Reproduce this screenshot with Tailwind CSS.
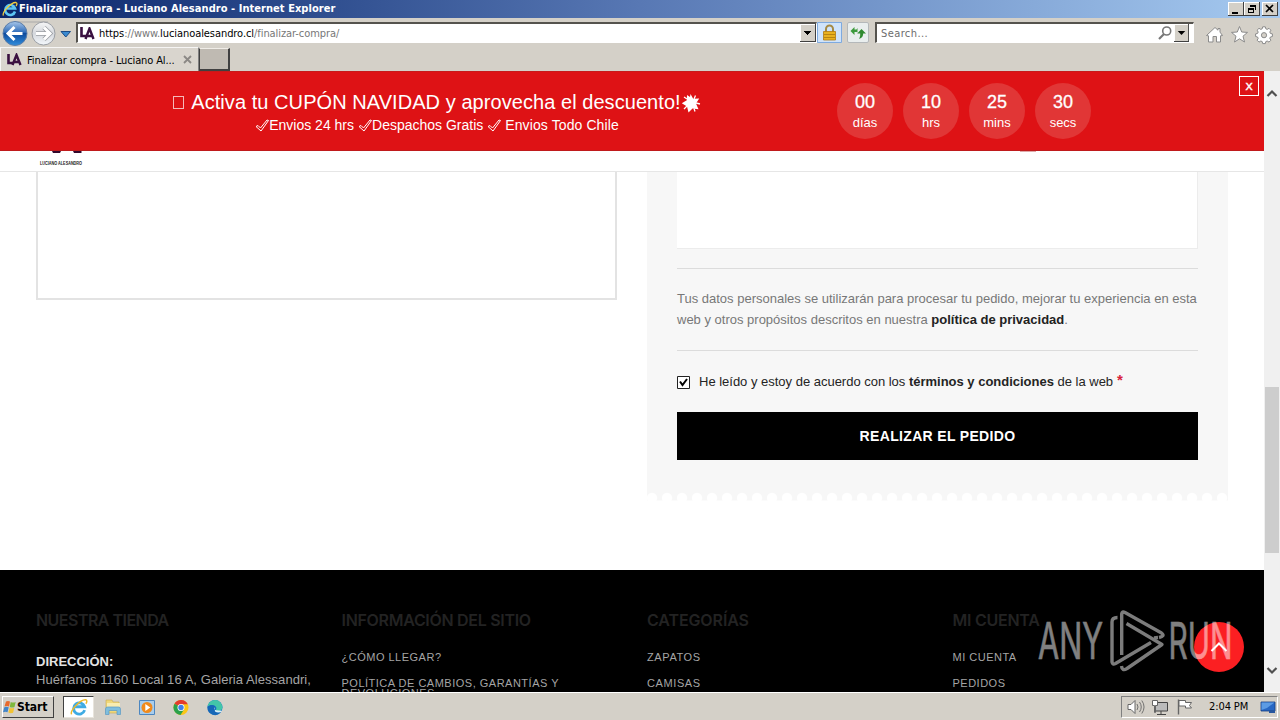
<!DOCTYPE html>
<html lang="es">
<head>
<meta charset="utf-8">
<title>Finalizar compra - Luciano Alesandro</title>
<script src="https://cdn.jsdelivr.net/npm/@tailwindcss/browser@4"></script>
</head>
<body class="w-[1280px] h-[720px] overflow-hidden flex flex-col bg-[#d4d0c8] font-['Liberation_Sans',sans-serif] whitespace-nowrap">

<!-- Title bar -->
<div class="h-[18px] shrink-0 flex items-center bg-linear-to-r from-[#0a246a] via-[#5878b4] to-[#a6caf0] pl-[2px] pr-[2px]">
  <svg class="w-4 h-4 mr-px" viewBox="0 0 16 16"><path d="M13 10.500A5 5 0 1 1 13 7.500H5" fill="none" stroke="#5cc4f4" stroke-width="2.600"/><path d="M1.500 14.500C-.5 12 9 1 14 1.500 15.500 2 15 4 14 5" fill="none" stroke="#f5cf3c" stroke-width="1.300"/></svg>
  <span class="text-white font-bold font-['DejaVu_Sans_Condensed','DejaVu_Sans',sans-serif] font-stretch-condensed text-[11px] leading-[18px] tracking-[0.05px]">Finalizar compra - Luciano Alesandro - Internet Explorer</span>
  <div class="ml-auto flex">
    <svg class="w-[50px] h-[14px]" viewBox="0 0 50 14" shape-rendering="crispEdges">
      <g><path d="M0 0h16v14H0zM16 0h16v14H16zM34 0h16v14H34z" fill="#404040"/><path d="M0 0h15v13H0zM16 0h15v13H16zM34 0h15v13H34z" fill="#fff"/><path d="M1 1h14v12H1zM17 1h14v12H17zM35 1h14v12H35z" fill="#d4d0c8"/></g>
      <path d="M4 10h6v2H4z"/><path d="M22.500 3.500h5v4M20.500 6.500h5v4h-5z" fill="none" stroke="#000"/><path d="M22 3h6v2h-6zM20 6h6v2h-6z"/><path d="M38 3l7 7M45 3l-7 7" stroke="#000" stroke-width="1.700" shape-rendering="auto"/>
    </svg>
  </div>
</div>

<!-- Address bar -->
<div class="h-[29px] shrink-0 flex items-start pt-[3px] font-['DejaVu_Sans_Condensed','DejaVu_Sans',sans-serif] font-stretch-condensed text-[11px]">
  <svg class="w-[75px] h-[26px] shrink-0" viewBox="0 0 75 26">
    <defs><linearGradient id="bk" x1="0" y1="0" x2="0" y2="1"><stop offset="0" stop-color="#a9c7ea"/><stop offset=".45" stop-color="#2f6cba"/><stop offset=".5" stop-color="#0f4b9c"/><stop offset="1" stop-color="#2f8ddd"/></linearGradient><linearGradient id="fw" x1="0" y1="0" x2="0" y2="1"><stop offset="0" stop-color="#f6f6f6"/><stop offset=".5" stop-color="#d5d8dd"/><stop offset="1" stop-color="#f4f8fc"/></linearGradient></defs>
    <path d="M15 1H48" stroke="#aaa" fill="none"/>
    <circle cx="43.500" cy="12.500" r="11.500" fill="url(#fw)" stroke="#999da3"/>
    <circle cx="15" cy="12.500" r="12" fill="url(#bk)" stroke="#5a7ca8"/>
    <path d="M8 12.500h14.500M14.500 6L8 12.500l6.500 6.500" fill="none" stroke="#fff" stroke-width="3"/>
    <path d="M36 12.500h14M44 6.500l6 6-6 6" fill="none" stroke="#9a9da2" stroke-width="4.500"/><path d="M36 12.500h14M44 6.500l6 6-6 6" fill="none" stroke="#fff" stroke-width="3"/>
    <path d="M61 10.500h9.500l-4.700 5.500z" fill="#3a8ad0" stroke="#1b4c86"/>
  </svg>
  <div class="w-[741px] h-[21px] mt-[1px] ml-[1px] shrink-0 bg-white border-t-2 border-l-2 border-t-[#55534e] border-l-[#55534e] border-b border-r border-b-white border-r-white flex items-center">
    <svg class="w-[15px] h-[13px] ml-[2px]" viewBox="0 0 15 13"><path d="M1.500 0v9H6" fill="none" stroke="#3a1040" stroke-width="2.600"/><path d="M5.500 12L9.500 1.500 13.500 12M6 9h7" fill="none" stroke="#3a1040" stroke-width="2.400"/></svg>
    <span class="ml-[4px] pt-[2px] text-[#777] leading-[18px] tracking-[-0.07px]"><span class="text-black">https</span>://www.<span class="text-black">lucianoalesandro.cl</span>/finalizar-compra/</span>
    <svg class="w-4 h-[18px] ml-auto" viewBox="0 0 16 18" shape-rendering="crispEdges"><path d="M0 0h16v18H0z" fill="#404040"/><path d="M0 0h15v17H0z" fill="#fff"/><path d="M1 1h14v16H1z" fill="#d4d0c8"/><path d="M4 7h7v1H4zM5 8h5v1H5zM6 9h3v1H6zM7 10h1v1H7z"/></svg>
  </div>
  <svg class="w-[25px] h-[22px] shrink-0" viewBox="0 0 25 22"><path d="M.5 1.500h24v20H.5z" fill="#cfe3fa" stroke="#7eaadf"/><path d="M9 11V8a3.500 3.500 0 0 1 7 0v3" fill="none" stroke="#a58a45" stroke-width="2"/><path d="M6.500 10.500h12V19h-12z" fill="#e9b11e" stroke="#b07a10" stroke-width=".8"/><path d="M7 13.500h11M7 16.500h11" stroke="#b98410"/></svg>
  <svg class="w-[22px] h-[22px] ml-[5px] shrink-0" viewBox="0 0 22 22"><rect x=".5" y="1.500" width="21" height="20" rx="1.500" fill="#e9eeee" stroke="#b4b8ba"/><g fill="#3c9a3c"><path d="M3.500 10L7.500 6v2.500h2L10.500 7v4.500l-1-.5h-2v3z" /><path d="M14.500 8l4.500 4.500h-2.800q0 4-4 5.500 1.300-2.500 1-5.500h-3z" fill="#2f8a30"/></g></svg>
  <div class="w-[319px] h-[21px] mt-[1px] ml-[6px] shrink-0 bg-white border-t-2 border-l-2 border-t-[#55534e] border-l-[#55534e] border-b border-r border-b-white border-r-white flex items-center">
    <span class="ml-[4px] pt-[2px] text-[#6d6d6d] leading-[18px] tracking-[0.4px]">Search...</span>
    <svg class="w-[14px] h-[14px] ml-auto mr-[2px]" viewBox="0 0 14 14"><circle cx="8.700" cy="5" r="4" fill="none" stroke="#777" stroke-width="1.600"/><path d="M6 8L1 13" stroke="#777" stroke-width="2.200"/></svg>
    <svg class="w-[15px] h-[18px] mr-[4px]" viewBox="0 0 16 18" preserveAspectRatio="none"><path d="M0 0h16v18H0z" fill="#404040"/><path d="M0 0h15v17H0z" fill="#fff"/><path d="M1 1h14v16H1z" fill="#d4d0c8"/><path d="M4 7h8l-4 4z"/></svg>
  </div>
  <svg class="w-[68px] h-[20px] mt-[4px] ml-[11px] shrink-0" viewBox="0 0 68 20" fill="#fff" stroke="#8b8b8b" stroke-width="1">
    <path d="M1.500 10.500L10 2.500l3 2.700V3.500h2v3.600l2.500 3.400-2 .3V17h-4v-5.500H8V17H3.500v-6.200z"/>
    <path d="M34.500 1.500l2.200 5.500 5.800.4-4.500 3.800 1.500 5.800-5-3.200-5 3.200 1.500-5.800-4.500-3.800 5.800-.4z"/>
    <path d="M57.700 2.500h2.600l.5 2 1.400.6 1.800-1.100 1.900 1.900-1.100 1.800.6 1.400 2 .5v2.600l-2 .5-.6 1.400 1.100 1.800-1.900 1.900-1.800-1.100-1.400.6-.5 2h-2.600l-.5-2-1.400-.6-1.800 1.100-1.900-1.900 1.100-1.800-.6-1.400-2-.5V9.600l2-.5.6-1.400-1.100-1.800L54 4l1.800 1.100 1.400-.6z" transform="translate(0 -.7)"/><circle cx="59" cy="10.200" r="2.600" fill="#d4d0c8"/>
  </svg>
</div>

<!-- Tabs -->
<div class="h-[24px] shrink-0 flex font-['DejaVu_Sans_Condensed','DejaVu_Sans',sans-serif] font-stretch-condensed text-[11px]">
  <div class="w-[199px] h-[24px] flex items-center border-l border-t border-white/80 border-r border-r-[#808080] pl-[6px] bg-[#d9d5ce]">
    <svg class="w-[15px] h-[13px]" viewBox="0 0 15 13"><path d="M1.500 1v9H6" fill="none" stroke="#3a1040" stroke-width="2.600"/><path d="M5.500 12L9.500 2 13.500 12M6 9h7" fill="none" stroke="#3a1040" stroke-width="2.400"/></svg>
    <span class="ml-[5px] pt-[2px] text-black leading-[22px] tracking-[-0.13px]">Finalizar compra - Luciano Al...</span>
    <svg class="w-[9px] h-[9px] ml-auto mr-[6px]" viewBox="0 0 9 9"><path d="M1 1l7 7M8 1L1 8" stroke="#8b8885" stroke-width="1.800"/></svg>
  </div>
  <div class="w-[31px] h-[23px] mt-px border border-r-2 border-b-2 border-[#404040] border-t-[#f0ede8] border-l-[#404040] bg-[#bfbab2]"></div>
</div>

<!-- Viewport -->
<div class="h-[621px] shrink-0 flex bg-white">
  <div class="w-[1264px] h-full flex flex-col overflow-hidden relative">

    <!-- Promo banner -->
    <div class="h-[80px] shrink-0 bg-[#de1215] border-t border-b border-t-[#c81a1a] border-b-[#c01a1c] text-white flex relative">
      <div class="w-[837px] pl-[37px] flex flex-col items-center pt-[18px]">
        <div class="flex items-center h-[25px] text-[20px] leading-[25px]">
          <span class="w-[11px] h-[13px] border border-white/70 mr-[7px]"></span>
          <span class="tracking-[0.06px]">Activa tu CUPÓN NAVIDAD y aprovecha el descuento!</span>
          <svg class="w-[20px] h-[20px]" viewBox="0 0 20 20" fill="#fff"><path d="M9.500 1l2.700 4.800 6-.2-3.200 5 2.500 5.600-6-.8L7.500 19.500 6 13.500.8 10.200l5-3L6 2l3 2z"/><path d="M3 4l3 2M14.500 2.500L13 6M19 11l-4-1M14 18.500l-1-3M3 16l3-3" stroke="#fff" stroke-width="1.300"/></svg>
        </div>
        <div class="flex items-center h-[20px] text-[14px] leading-[20px]">
          <svg class="w-[14px] h-[13px]" viewBox="0 0 14 13"><path d="M1 7.500l2-1L5.500 9 12 1l1.500.5L6 12z" fill="none" stroke="#fff"/></svg>
          <span>Envios 24 hrs</span>
          <svg class="w-[14px] h-[13px] ml-[4px]" viewBox="0 0 14 13"><path d="M1 7.500l2-1L5.500 9 12 1l1.500.5L6 12z" fill="none" stroke="#fff"/></svg>
          <span>Despachos Gratis</span>
          <svg class="w-[14px] h-[13px] ml-[4px]" viewBox="0 0 14 13"><path d="M1 7.500l2-1L5.500 9 12 1l1.500.5L6 12z" fill="none" stroke="#fff"/></svg>
          <span class="ml-[4px] tracking-[0.1px]">Envios Todo Chile</span>
        </div>
      </div>
      <div class="flex gap-[10px] pt-[11px] text-center">
        <div class="size-[56px] rounded-full bg-[#e13636] pt-[8px]"><div class="text-[18px] leading-[22px] [-webkit-text-stroke:0.3px_white]">00</div><div class="text-[13px] leading-[19px]">días</div></div>
        <div class="size-[56px] rounded-full bg-[#e13636] pt-[8px]"><div class="text-[18px] leading-[22px] [-webkit-text-stroke:0.3px_white]">10</div><div class="text-[13px] leading-[19px]">hrs</div></div>
        <div class="size-[56px] rounded-full bg-[#e13636] pt-[8px]"><div class="text-[18px] leading-[22px] [-webkit-text-stroke:0.3px_white]">25</div><div class="text-[13px] leading-[19px]">mins</div></div>
        <div class="size-[56px] rounded-full bg-[#e13636] pt-[8px]"><div class="text-[18px] leading-[22px] [-webkit-text-stroke:0.3px_white]">30</div><div class="text-[13px] leading-[19px]">secs</div></div>
      </div>
      <div class="ml-auto mr-[5px] mt-[4px] w-[20px] h-[20px] border border-white text-center text-[13px] leading-[17px] font-['DejaVu_Sans',sans-serif] [-webkit-text-stroke:0.3px_white]">x</div>
    </div>

    <!-- Sticky header remainder -->
    <div class="h-[21px] shrink-0 bg-white border-b border-[#e6e6e6] flex justify-between">
      <div class="ml-[39px] w-[46px]">
        <svg class="w-[46px] h-[18px] overflow-visible" viewBox="0 0 46 18"><path d="M13 0h9l-1 2h-7zM34 0h8.500v2H35z" fill="#32082c"/><text x="1" y="13.500" font-size="4.500" font-weight="bold" font-family="Liberation Sans" textLength="42" lengthAdjust="spacingAndGlyphs" fill="#222">LUCIANO ALESANDRO</text></svg>
      </div>
      <div class="w-[16px] h-px bg-[#dfa9a9] mr-[228px]"></div>
    </div>

    <!-- Checkout -->
    <div class="h-[398px] shrink-0 flex pl-[36px]">
      <div class="w-[581px] h-[128px] border-2 border-t-0 border-[#e3e3e3]"></div>
      <div class="ml-[30px] w-[581px]">
        <div class="h-[320px] bg-[#f7f7f7] px-[30px]">
          <div class="h-[77px] bg-white border-r border-b border-[#ececec]"></div>
          <div class="mt-[19px] h-px bg-[#dcdcdc]"></div>
          <p class="mt-[19px] text-[13px] leading-[21px] text-[#777]">Tus datos personales se utilizarán para procesar tu pedido, mejorar tu experiencia en esta<br>web y otros propósitos descritos en nuestra <b class="text-[#222]">política de privacidad</b>.</p>
          <div class="mt-[20px] h-px bg-[#dcdcdc]"></div>
          <div class="mt-[19px] h-[24px] flex items-center text-[13px] text-[#242424]">
            <svg class="w-[13px] h-[13px] mt-px" viewBox="0 0 13 13"><path d="M.5.500h12v12H.5z" fill="#fff" stroke="#222"/><path d="M3 5.500l2.500 3.500L10 3" fill="none" stroke="#000" stroke-width="2"/></svg>
            <span class="ml-[9px] tracking-[-0.01px]">He leído y estoy de acuerdo con los <b>términos y condiciones</b> de la web</span>
            <span class="ml-[4px] -mt-[4px] text-[15px] font-bold text-[#d8223c]">*</span>
          </div>
          <div class="mt-[18px] h-[48px] bg-black text-white font-bold text-[14px] leading-[48px] text-center tracking-[0.33px]">REALIZAR EL PEDIDO</div>
        </div>
        <svg class="w-[581px] h-[9px] block" viewBox="0 0 581 9"><defs><pattern id="scal" width="15" height="9" patternUnits="userSpaceOnUse"><path d="M0 0h15v9H0z" fill="#f7f7f7"/><circle cx="5" cy="6" r="5.300" fill="#fff"/><path d="M0 8.500h15v1H0z" fill="#fff"/></pattern></defs><rect width="581" height="9" fill="url(#scal)"/></svg>
      </div>
    </div>

    <!-- Footer -->
    <div class="h-[122px] shrink-0 bg-black grid grid-cols-[305.500px_305.500px_305.500px_1fr] pl-[36px] pt-[39px] overflow-hidden text-[#a5a5a5]">
      <div>
        <h4 class="font-['Inter',sans-serif] font-semibold text-[16px] leading-[22px] text-[#232323] tracking-[-0.53px]">NUESTRA TIENDA</h4>
        <div class="mt-[22px] text-[13px] leading-[18px]"><b class="text-[#e2e2e2] block">DIRECCIÓN:</b><span class="tracking-[0.06px]">Huérfanos 1160 Local 16 A, Galeria Alessandri,</span></div>
      </div>
      <div>
        <h4 class="font-['Inter',sans-serif] font-semibold text-[16px] leading-[22px] text-[#232323] tracking-[-0.3px]">INFORMACIÓN DEL SITIO</h4>
        <div class="mt-[21px] text-[11px] leading-[10px] tracking-[0.5px]">¿CÓMO LLEGAR?<div class="mt-[16px]">POLÍTICA DE CAMBIOS, GARANTÍAS Y<br>DEVOLUCIONES</div></div>
      </div>
      <div>
        <h4 class="font-['Inter',sans-serif] font-semibold text-[16px] leading-[22px] text-[#232323] tracking-[-0.1px]">CATEGORÍAS</h4>
        <div class="mt-[21px] text-[11px] leading-[10px] tracking-[0.6px]">ZAPATOS<div class="mt-[16px]">CAMISAS</div></div>
      </div>
      <div>
        <h4 class="font-['Inter',sans-serif] font-semibold text-[16px] leading-[22px] text-[#232323] tracking-[-0.25px]">MI CUENTA</h4>
        <div class="mt-[21px] text-[11px] leading-[10px] tracking-[0.5px]">MI CUENTA<div class="mt-[16px]">PEDIDOS</div></div>
      </div>
    </div>

    <!-- Scroll-to-top button with watermark over it -->
    <svg class="absolute left-[1034px] top-[534px] w-[220px] h-[72px] overflow-visible" viewBox="1034 605 220 72">
      <circle cx="1219" cy="647" r="25" fill="#fb1f22"/>
      <g opacity=".5" fill="#fff" stroke="#fff" stroke-width=".6" font-family="Inter, sans-serif" font-weight="400" font-size="50">
        <text x="1038" y="659" textLength="65" lengthAdjust="spacingAndGlyphs">ANY</text>
        <text x="1168.500" y="659" textLength="64" lengthAdjust="spacingAndGlyphs">RUN</text>
      </g>
      <path d="M1211.500 651l7.500-7.500 7.500 7.500" fill="none" stroke="#fff" stroke-width="2"/>
      <g fill="none" stroke="#7c7c7c" stroke-width="3.400" stroke-linejoin="round">
        <path d="M1117.500 617.500Q1112 617.500 1112 622V662Q1112.500 665 1115.500 663.500L1151 642.500"/>
        <path d="M1121.700 655V614Q1122 611 1125 612.500L1161.500 633Q1165.500 636 1159 637.500"/>
        <path d="M1126.500 623.500L1162 644.500 1127 668.500Q1122 671.500 1121.500 666"/>
        <path d="M1154 638L1158 637.500"/>
      </g>
    </svg>
  </div>

  <!-- Scrollbar -->
  <div class="w-[16px] h-full bg-[#f0f0f0] flex flex-col items-center">
    <svg class="w-[12px] h-[8px] mt-[18px]" viewBox="0 0 12 8"><path d="M1.500 7L6 2.500 10.500 7" fill="none" stroke="#505050" stroke-width="2.200"/></svg>
    <div class="w-[14px] h-[166px] mt-[290px] bg-[#cdcdcd]"></div>
    <svg class="w-[12px] h-[8px] mt-auto mb-[17px]" viewBox="0 0 12 8"><path d="M1.500 1L6 5.500 10.500 1" fill="none" stroke="#505050" stroke-width="2.200"/></svg>
  </div>
</div>

<!-- Taskbar -->
<div class="h-[28px] shrink-0 flex items-start border-t border-white pt-[3px] pl-[2px] pr-[2px] font-['DejaVu_Sans_Condensed','DejaVu_Sans',sans-serif] font-stretch-condensed text-[11px] text-black">
  <div class="w-[52px] h-[22px] border border-t-white border-l-white border-r-[#404040] border-b-[#404040] flex items-center">
    <svg class="w-[14px] h-[14px]" viewBox="0 0 14 14"><path d="M3 1.500q2-1.200 4 0L6 6.500q-2-1-4.500 0z" fill="#e8692c"/><path d="M7.700 2q2.500 1.200 5 0l-1.200 5Q9 8 6.800 7z" fill="#7fb83c"/><path d="M1.300 7.300q2-1 4.400 0l-1.200 5q-2-1-4.500 0z" fill="#4285c8"/><path d="M6.600 7.800q2 1 4.700 0l-1.200 5q-2.300 1-4.700-.2z" fill="#f3c332"/></svg>
    <span class="font-bold text-[12px] leading-[20px] tracking-[-0.1px]">Start</span>
  </div>
  <div class="ml-[9px] w-[31px] h-[22px] bg-white border border-t-[#404040] border-l-[#404040] border-[#e8e4dc] flex items-center justify-center">
    <svg class="w-[18px] h-[18px]" viewBox="0 0 16 16"><path d="M13 10.800A5 5 0 1 1 13 7.800H4.500" fill="none" stroke="#3fabe3" stroke-width="2.500"/><path d="M1.500 14.500C-.5 12 9 1 14 1.500 15.500 2 15 4 14 5" fill="none" stroke="#ecb92c" stroke-width="1.300"/></svg>
  </div>
  <svg class="w-[134px] h-[20px] ml-[8px] mt-px" viewBox="102 696 134 20">
    <path d="M106 699h6l1 2h6v11h-13z" fill="#f0d87a" stroke="#c8a850" stroke-width=".6"/><path d="M107 702h13v4h-13z" fill="#f8ecb0"/><path d="M105.500 713.500v-5.500q0-2 2-2h11q2 0 2 2v5.500h-3.500v-4h-8v4z" fill="#7fbedd" stroke="#5a9ac4" stroke-width=".7"/>
    <path d="M139.500 699.500h15v14h-15z" fill="#a9cdec" stroke="#4c86c0"/><circle cx="147" cy="706.500" r="5.500" fill="#f08a1c"/><path d="M145.300 703v7l5-3.500z" fill="#fff"/>
    <circle cx="181" cy="706.500" r="7.500" fill="#fbc616"/><path d="M181 706.500L174.500 702.700A7.500 7.500 0 0 1 187.800 703.300H181z" fill="#e33b2e"/><path d="M174.500 702.700A7.500 7.500 0 0 0 180.500 714L184 708.500l-3-2z" fill="#2ba14b"/><circle cx="181" cy="706.500" r="3.500" fill="#fff"/><circle cx="181" cy="706.500" r="2.700" fill="#3f7fe8"/>
    <circle cx="215" cy="706.500" r="7.500" fill="#1478cc"/><path d="M207.600 705.500A7.500 7.500 0 0 1 222.500 706c0 4-4 4.500-7 3.500 2-2.500.500-5-2.500-5-2.500 0-4.500 0-5.400 1z" fill="#43c6a8"/><path d="M207.600 705.500c3-3 9-1.500 7.900 2.500-1.500 1.500 1 4 5.500 3A7.500 7.500 0 0 1 207.500 706z" fill="#1667b7"/>
    <path d="M214.500 706q-2 4 6 3.500l1.500 1q-4 2-7 0z" fill="#d9eef8"/>
  </svg>
  <div class="ml-auto w-[157px] h-[22px] border border-t-[#808080] border-l-[#808080] border-r-white border-b-white flex items-center">
    <svg class="w-[70px] h-[18px] ml-[4px]" viewBox="1126 698 70 18" fill="#fff" stroke="#666">
      <path d="M1128 704.500h3l4-4v13l-4-4h-3z"/><path d="M1137 704q2 3 0 6M1139.500 702q3.500 5 0 10M1141.800 700.500q4.500 6.500 0 13" fill="none" stroke-width=".9"/>
      <path d="M1155.500 702.500h12v8.500h-12z" fill="#bbb" stroke="#444"/><path d="M1157 714.500h9M1161 711v3" stroke="#444"/><path d="M1152.500 700.500h5v5h-2v7h-1v-7h-2z"/>
      <path d="M1178.500 699.500v15" stroke-width="1.400"/><path d="M1179 700.500h6.500v2h6l-2 3 2 2.500h-6v-2H1179z"/>
    </svg>
    <span class="ml-[13px] leading-[20px] tracking-[-0.1px]">2:04 PM</span>
    <svg class="w-[16px] h-[16px] ml-auto mr-px" viewBox="0 0 16 16"><path d="M1 3h14v9H1z" fill="#2767c4" stroke="#153c80" stroke-width=".8"/><path d="M1.500 3.500h13L7 9 1.500 11z" fill="#5c9be4"/><path d="M9 11h6v3H9z" fill="#27569e"/></svg>
  </div>
</div>
</body>
</html>
